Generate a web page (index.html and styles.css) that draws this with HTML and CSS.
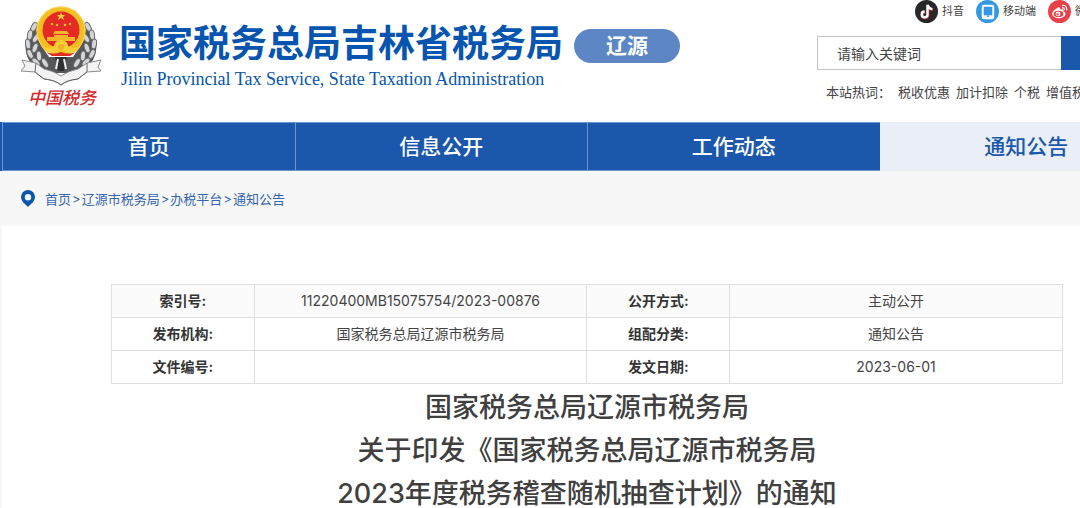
FILE: index.html
```
<!DOCTYPE html>
<html lang="zh-CN">
<head>
    <meta charset="UTF-8">
    <meta name="viewport" content="width=device-width, initial-scale=1.0">
    <title>国家税务总局辽源市税务局</title>
    <link rel="stylesheet" href="styles.css">
</head>
<body>
    <header class="header">
        <div class="wrap header-inner">
            <a class="emblem" href="#">
                <svg viewBox="0 0 82 82" aria-hidden="true">
                    <g fill="#55575a">
                        <path d="M14 20C4 30 1 46 10 58L24 66L32 58L20 40Z"/>
                        <path d="M66 20C76 30 79 46 70 58L56 66L48 58L60 40Z"/>
                        <path d="M24 52H56L54 68H26Z"/>
                    </g>
                    <g fill="#d5d6d7" stroke="#66686a" stroke-width="1">
                        <ellipse cx="13" cy="22" rx="2.5" ry="5" transform="rotate(28 13 22)"/>
                        <ellipse cx="9" cy="30" rx="2.5" ry="5" transform="rotate(10 9 30)"/>
                        <ellipse cx="15" cy="33" rx="2.5" ry="5" transform="rotate(35 15 33)"/>
                        <ellipse cx="7" cy="39" rx="2.5" ry="5" transform="rotate(-8 7 39)"/>
                        <ellipse cx="14" cy="43" rx="2.5" ry="5" transform="rotate(20 14 43)"/>
                        <ellipse cx="9" cy="49" rx="2.5" ry="5" transform="rotate(-25 9 49)"/>
                        <ellipse cx="18" cy="51" rx="2.5" ry="5" transform="rotate(-5 18 51)"/>
                        <ellipse cx="15" cy="57" rx="2.5" ry="5" transform="rotate(-45 15 57)"/>
                        <ellipse cx="24" cy="58" rx="2.5" ry="5" transform="rotate(-30 24 58)"/>
                        <ellipse cx="67" cy="22" rx="2.5" ry="5" transform="rotate(-28 67 22)"/>
                        <ellipse cx="71" cy="30" rx="2.5" ry="5" transform="rotate(-10 71 30)"/>
                        <ellipse cx="65" cy="33" rx="2.5" ry="5" transform="rotate(-35 65 33)"/>
                        <ellipse cx="73" cy="39" rx="2.5" ry="5" transform="rotate(8 73 39)"/>
                        <ellipse cx="66" cy="43" rx="2.5" ry="5" transform="rotate(-20 66 43)"/>
                        <ellipse cx="71" cy="49" rx="2.5" ry="5" transform="rotate(25 71 49)"/>
                        <ellipse cx="62" cy="51" rx="2.5" ry="5" transform="rotate(5 62 51)"/>
                        <ellipse cx="65" cy="57" rx="2.5" ry="5" transform="rotate(45 65 57)"/>
                        <ellipse cx="56" cy="58" rx="2.5" ry="5" transform="rotate(30 56 58)"/>
                    </g>
                    <path d="M34 52H46L43 66H37Z" fill="#2f3032"/>
                    <path d="M37 54L35 64M43 54L45 64" stroke="#eee" stroke-width="2"/>
                    <circle cx="40" cy="26" r="24.5" fill="#f4bd22"/>
                    <circle cx="40" cy="26" r="24" fill="none" stroke="#fbdc55" stroke-width="1"/>
                    <circle cx="40" cy="25" r="18.5" fill="#e32a25"/>
                    <path d="M40 7L41 10H44L42 12L43 15L40 13L37 15L38 12L36 10H39Z" fill="#f9d13c"/>
                    <g fill="#f5b52a">
                        <circle cx="31" cy="19" r="1.3"/>
                        <circle cx="36" cy="20" r="1.3"/>
                        <circle cx="44" cy="20" r="1.3"/>
                        <circle cx="49" cy="19" r="1.3"/>
                        <path d="M34 26H46L48 29H32Z"/>
                        <path d="M33 30H47V32H54V36H26V32H33Z"/>
                    </g>
                    <path d="M20 41Q29 45 33 41A7 6 0 0 1 47 41Q51 45 60 41L56 46Q48 50 40 45Q32 50 24 46Z" fill="#f9cf35"/>
                    <circle cx="40" cy="42" r="3" fill="#f0b028"/>
                    <path d="M25 47Q33 50 40 47Q47 50 55 47L49 51H31Z" fill="#de2b24"/>
                    <path d="M1 55L15 58L23 64Q33 66 40 71Q47 66 57 64L66 58L80 55L77 62L80 66L66 67L57 74Q46 75 40 80Q34 75 23 74L14 67L0 66L4 61Z" fill="#f3f3f3" stroke="#8a8c8e"/>
                    <path d="M15 58L14 67M66 58L66 67M14 67L23 74Q34 75 40 80Q46 75 57 74L66 67" fill="none" stroke="#66686a"/>
                </svg>
                <span class="emblem-text">中国税务</span>
            </a>
            <div class="site-title">
                <h1>国家税务总局吉林省税务局</h1>
                <p>Jilin Provincial Tax Service, State Taxation Administration</p>
            </div>
            <span class="city">辽源</span>
            <div class="tools">
                <div class="social">
                    <a href="#">
                        <svg viewBox="0 0 24 24" aria-hidden="true">
                            <circle cx="12" cy="12" r="12" fill="#282828"/>
                            <path d="M13 5V15A3 3 0 1 1 10 12M13 5Q14 9 18 9.5" fill="none" stroke="#f04458" stroke-width="2.5" transform="translate(.6 .6)"/>
                            <path d="M13 5V15A3 3 0 1 1 10 12M13 5Q14 9 18 9.5" fill="none" stroke="#fff" stroke-width="2.5"/>
                        </svg>
                        抖音
                    </a>
                    <a href="#">
                        <svg viewBox="0 0 24 24" aria-hidden="true">
                            <circle cx="12" cy="12" r="12" fill="#3497e2"/>
                            <rect x="7" y="6" width="11" height="13" rx="1" fill="none" stroke="#fff" stroke-width="2"/>
                            <path d="M7 16H18V19H7Z" fill="#fff"/>
                            <circle cx="12.5" cy="17" r="1" fill="#3497e2"/>
                        </svg>
                        移动端
                    </a>
                    <a href="#">
                        <svg viewBox="0 0 24 24" aria-hidden="true">
                            <circle cx="12" cy="12" r="12" fill="#e8414a"/>
                            <path d="M10 8C12 7 13 8 12.5 10C15 9 17 10 16 12C20 13 19 18 12 19C4 19 3 14 6 11Q8 9 10 8Z" fill="#fff"/>
                            <ellipse cx="11" cy="14.5" rx="5" ry="3.3" fill="#e8414a"/>
                            <circle cx="10.5" cy="14.5" r="2.5" fill="#fff"/>
                            <circle cx="10" cy="15" r="1.2" fill="#e8414a"/>
                            <path d="M14.5 5.5Q20 5 19.5 11M14.5 8Q17.5 8 17 10.5" fill="none" stroke="#fff" stroke-width="1.2"/>
                        </svg>
                        微博
                    </a>
                </div>
                <form class="search">
                    <input type="text" placeholder="请输入关键词" aria-label="请输入关键词">
                    <button type="submit" aria-label="搜索"></button>
                </form>
                <div class="hot">
                    <span>本站热词：</span>
                    <a href="#">税收优惠</a>
                    <a href="#">加计扣除</a>
                    <a href="#">个税</a>
                    <a href="#">增值税</a>
                </div>
            </div>
        </div>
    </header>

    <nav class="nav">
        <div class="wrap nav-inner">
            <a href="#">首页</a>
            <a href="#">信息公开</a>
            <a href="#">工作动态</a>
            <a href="#" class="active">通知公告</a>
        </div>
    </nav>

    <div class="wrap">
        <div class="crumbs">
            <svg viewBox="0 0 14 17" aria-hidden="true">
                <path fill-rule="evenodd" d="M7 0A7 7 0 0 1 14 7C14 11 10 14 7 17C4 14 0 11 0 7A7 7 0 0 1 7 0ZM7 4A3.2 3.2 0 1 0 7 10.4A3.2 3.2 0 1 0 7 4Z" fill="#0b57ae"/>
            </svg>
            <a href="#">首页</a><span>&gt;</span><a href="#">辽源市税务局</a><span>&gt;</span><a href="#">办税平台</a><span>&gt;</span><a href="#">通知公告</a>
        </div>

        <main class="article">
            <table class="info">
                <tr>
                    <th>索引号:</th>
                    <td>11220400MB15075754/2023-00876</td>
                    <th>公开方式:</th>
                    <td>主动公开</td>
                </tr>
                <tr>
                    <th>发布机构:</th>
                    <td>国家税务总局辽源市税务局</td>
                    <th>组配分类:</th>
                    <td>通知公告</td>
                </tr>
                <tr>
                    <th>文件编号:</th>
                    <td></td>
                    <th>发文日期:</th>
                    <td>2023-06-01</td>
                </tr>
            </table>
            <h2>国家税务总局辽源市税务局<br>关于印发《国家税务总局辽源市税务局<br>2023年度税务稽查随机抽查计划》的通知</h2>
        </main>
    </div>
</body>
</html>
```
FILE: styles.css
```
:root {
    --blue: #1b57aa;
    --logo-blue: #0755ae;
    --text: #444444;
    --line: #dfdfdf;
}
* {
    box-sizing: border-box;
}
html {
    overflow: hidden auto;
}
body {
    margin: 0;
    min-width: 1172px;
    background-color: #f7f7f7;
    color: var(--text);
    font-family: Inter, "Noto Sans CJK SC", sans-serif;
    font-size: 14px;
}
a {
    color: inherit;
    text-decoration: none;
}
.wrap {
    min-width: 1170px;
    margin-left: 2px;
}
.header {
    background-color: #fff;
}
.header-inner {
    display: flex;
    align-items: flex-start;
    height: 122px;
    padding-left: 19px;
}
.emblem {
    width: 82px;
    margin-top: 5px;
    text-align: center;
}
.emblem svg {
    display: block;
    width: 82px;
    height: 82px;
}
.emblem-text {
    display: block;
    color: #d22a2a;
    font-size: 17px;
    font-style: italic;
    font-weight: 500;
    line-height: 22px;
}
.site-title {
    margin: 20px 0 0 16px;
    color: var(--logo-blue);
}
.site-title h1 {
    margin: 0;
    font-size: 37px;
    line-height: 48px;
}
.site-title p {
    margin: 0 0 0 2px;
    font-family: "Liberation Serif", serif;
    font-size: 18px;
    line-height: 22px;
}
.city {
    width: 106px;
    margin: 29px 0 0 11px;
    border-radius: 17px;
    background-color: #5d87c4;
    color: #fff;
    font-size: 21px;
    font-weight: 700;
    line-height: 34px;
    text-align: center;
}
.tools {
    flex: 1;
    margin-left: 137px;
}
.social {
    display: flex;
    height: 36px;
    padding-left: 98px;
    font-size: 11px;
    line-height: 22px;
    white-space: nowrap;
}
.social a {
    display: flex;
    gap: 4px;
    margin-right: 12px;
}
.social svg {
    width: 23px;
    height: 23px;
}
.search {
    display: flex;
    height: 34px;
}
.search input {
    width: 244px;
    padding: 0 19px;
    border: 1px solid #c4c4c4;
    border-right: 0;
    font: inherit;
}
.search input::placeholder {
    color: var(--text);
}
.search button {
    width: 90px;
    border: 0;
    background-color: var(--blue);
}
.hot {
    display: flex;
    gap: 6px;
    margin: 12px 0 0 9px;
    font-size: 13px;
    line-height: 20px;
    white-space: nowrap;
}
.hot span {
    width: 66px;
}
.nav {
    background-color: var(--blue);
}
.nav-inner {
    display: grid;
    grid-template-columns: repeat(4, 1fr);
}
.nav a {
    border: 1px solid #6d96cc;
    border-right: 0;
    color: #fff;
    font-size: 21px;
    font-weight: 500;
    line-height: 47px;
    text-align: center;
}
.nav a.active {
    border-color: #e9eef7;
    background-color: #e9eef7;
    color: var(--blue);
}
.crumbs {
    display: flex;
    align-items: center;
    height: 55px;
    padding-left: 19px;
    color: #3565ad;
    font-size: 13px;
}
.crumbs svg {
    width: 14px;
    height: 17px;
    margin-right: 10px;
}
.crumbs span {
    margin: 0 1px;
}
.article {
    padding: 58px 109px 0;
    background-color: #fff;
}
.info {
    width: 100%;
    border-collapse: collapse;
    table-layout: fixed;
    text-align: center;
}
.info tr:first-child {
    background-color: #fbfbfb;
}
.info th,
.info td {
    height: 33px;
    padding: 0;
    border: 1px solid var(--line);
    line-height: 20px;
}
.info th {
    width: 15%;
    color: #333;
}
.info td {
    width: 35%;
}
.article h2 {
    margin: 2px 0 0;
    color: #404040;
    font-size: 27px;
    font-weight: 500;
    line-height: 43px;
    text-align: center;
}
```
